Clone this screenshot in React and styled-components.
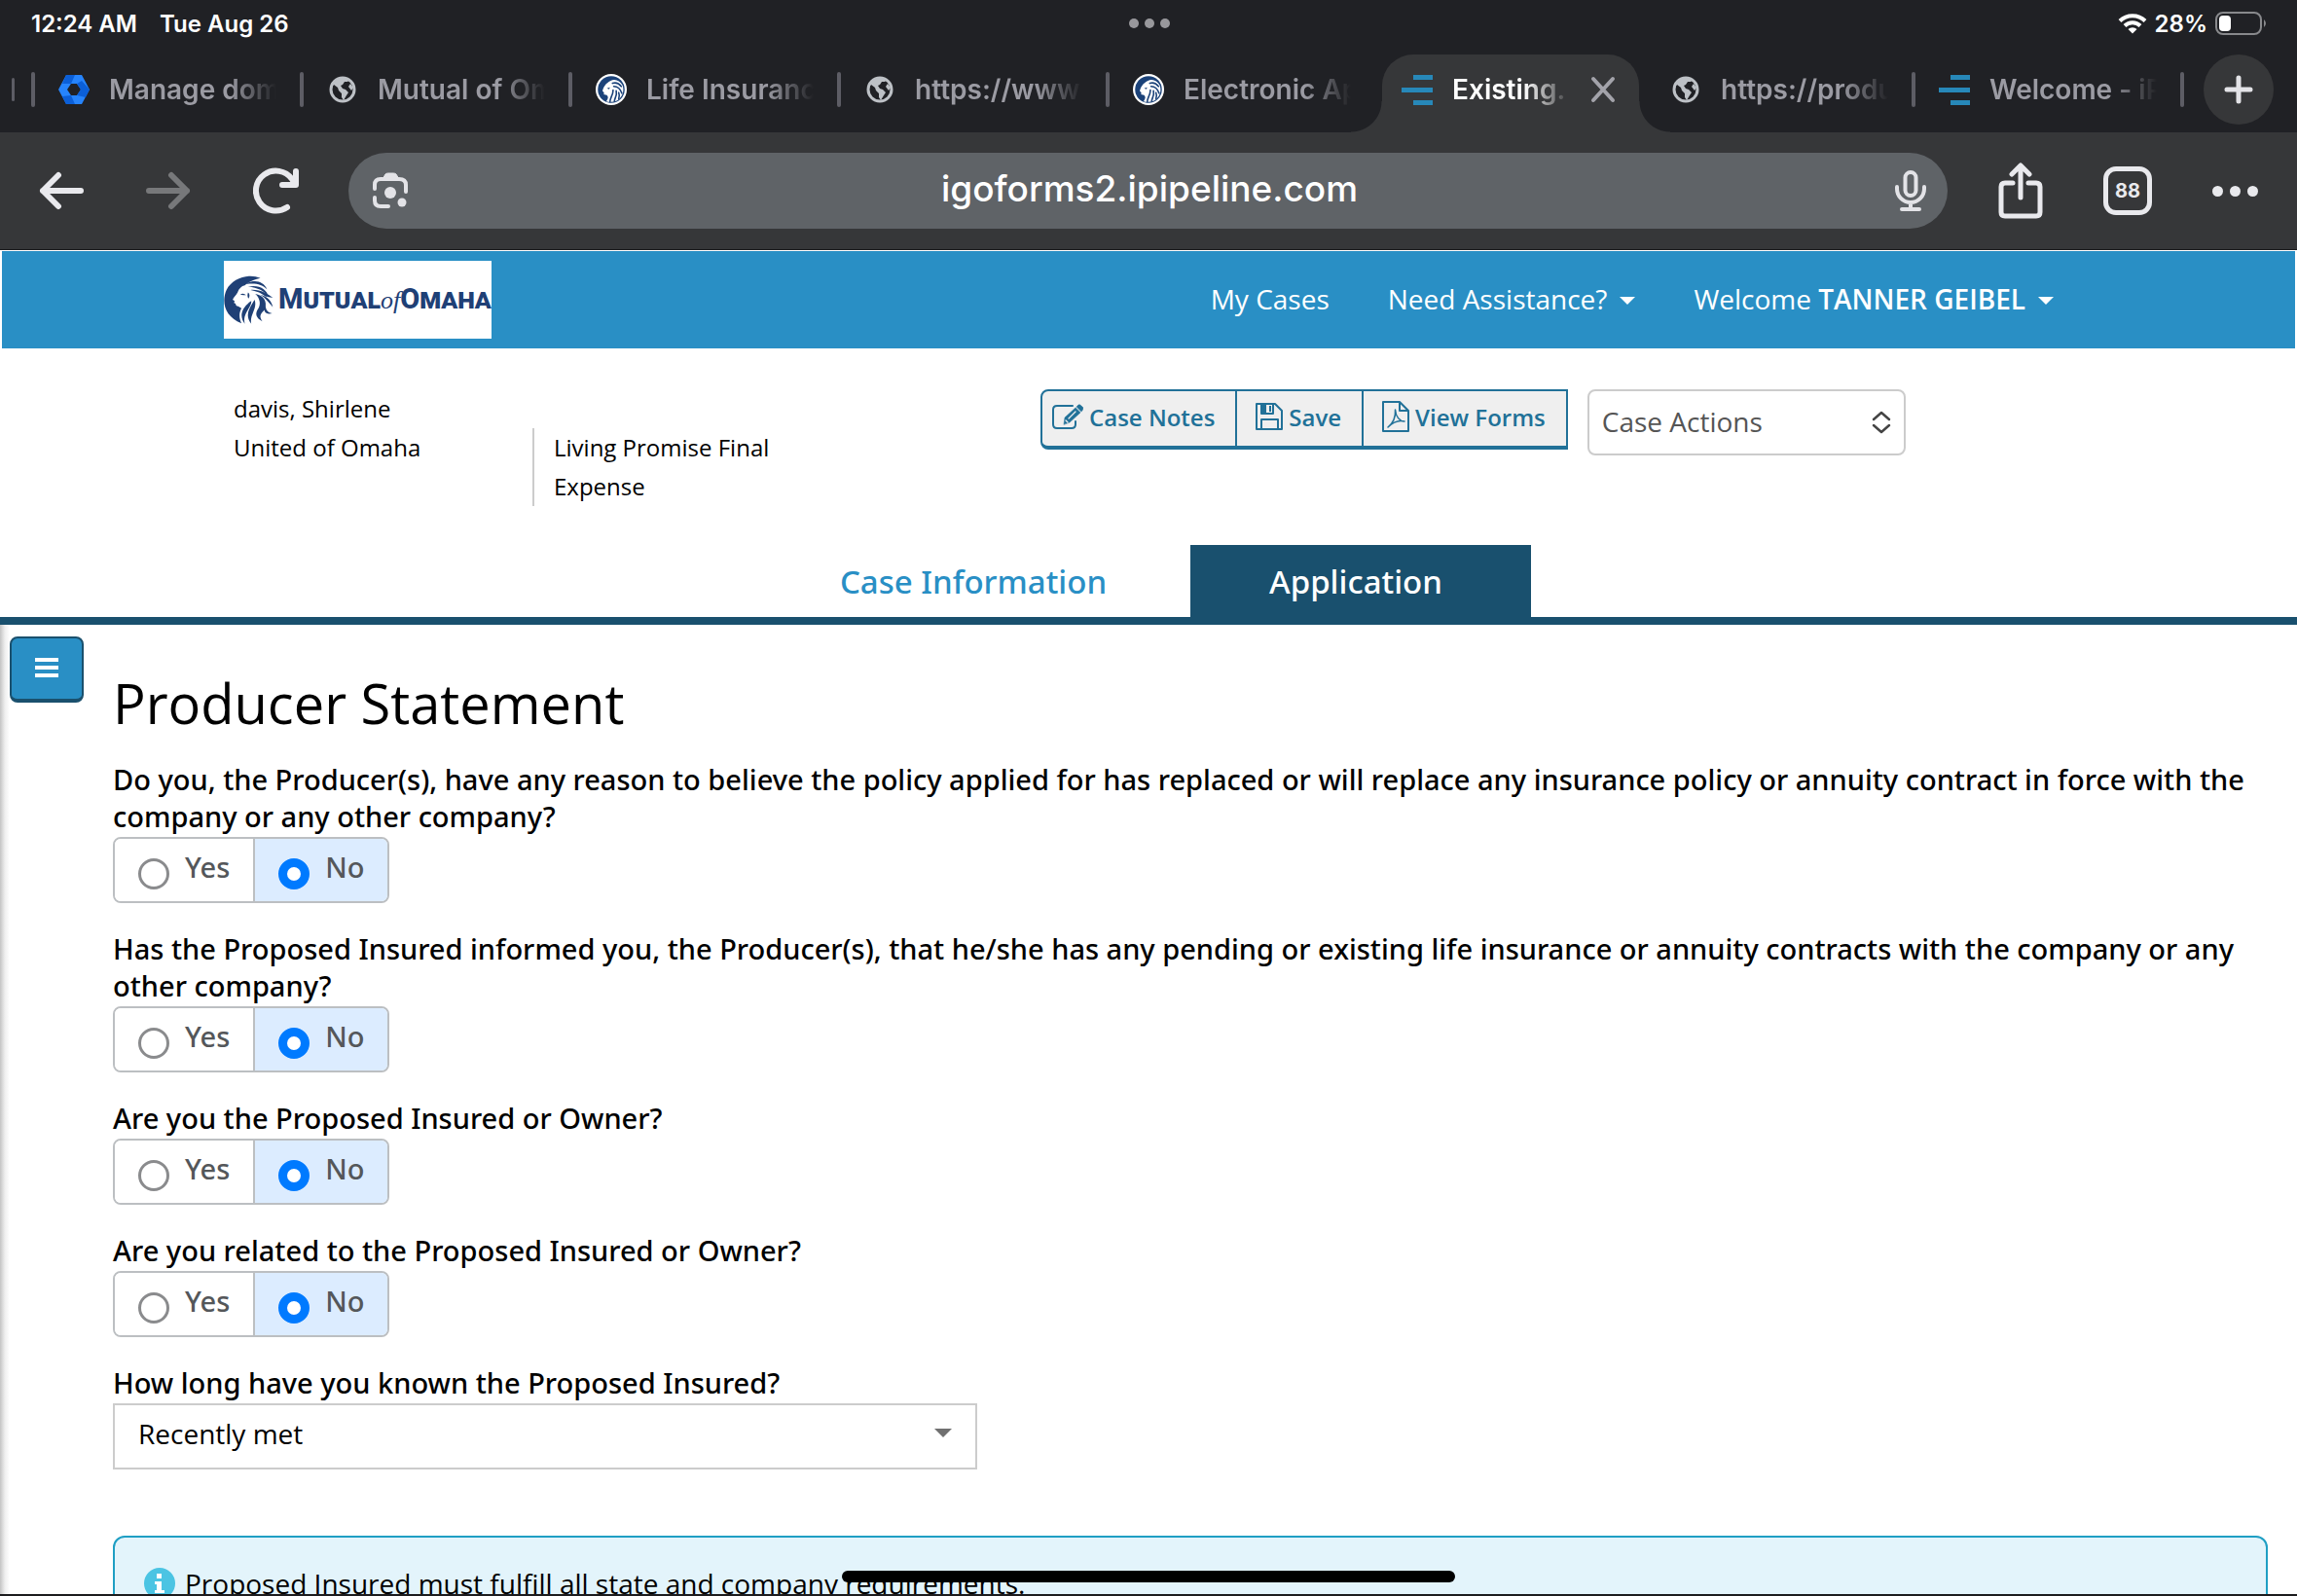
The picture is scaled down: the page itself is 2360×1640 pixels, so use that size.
import React, { useState } from "react";
import styled, { createGlobalStyle, css } from "styled-components";

const GlobalStyle = createGlobalStyle`
  *, *::before, *::after { box-sizing: border-box; }
  html, body { margin: 0; padding: 0; background: #fff; }
  body { font-family: "Open Sans", "Noto Sans", sans-serif; color: #000; }
  button, input, select { font: inherit; color: inherit; margin: 0; }
  a { color: inherit; text-decoration: none; }
  svg { display: block; flex: none; }
`;

const uiFont = `Inter, Roboto, sans-serif`;
const mediumFont = `"Noto Sans", "Open Sans", sans-serif`;

/* ---------- device + browser chrome ---------- */

const Screen = styled.div`
  display: flex;
  flex-direction: column;
  height: 100vh;
  overflow: hidden;
  border-bottom: 2px solid #1c1c1e;
`;

const Chrome = styled.header`
  flex: none;
  background: #202125;
  font-family: ${uiFont};
  border-bottom: 1px solid #1b1b1d;
`;

const StatusBar = styled.div`
  display: grid;
  grid-template-columns: 1fr auto 1fr;
  align-items: center;
  height: 48px;
  padding: 0 30px 0 32px;
  color: #fff;
  font-size: 24px;
  font-weight: 600;
`;

const StatusLeft = styled.div`
  display: flex;
  gap: 23px;
`;

const StatusRight = styled.div`
  display: flex;
  justify-content: flex-end;
  align-items: center;
  gap: 8px;
`;

const Dots = styled.div`
  display: flex;
  gap: ${(p) => p.$gap}px;
  i {
    width: ${(p) => p.$size}px;
    height: ${(p) => p.$size}px;
    border-radius: 50%;
    background: ${(p) => p.$color};
  }
`;

const TabStrip = styled.nav`
  display: flex;
  height: 88px;
  padding: 8px 24px 0 0;
`;

const TabSliver = styled.div`
  width: 32px;
  padding: 24px 0 0 12px;
  &::before {
    content: "";
    display: block;
    width: 3px;
    height: 24px;
    border-radius: 2px;
    background: #5d5d65;
  }
`;

const TabList = styled.div`
  display: flex;
  flex: 1;
  min-width: 0;
`;

const Divider = styled.span`
  flex: none;
  width: 4px;
  height: 36px;
  margin-top: 18px;
  border-radius: 2px;
  background: ${(p) => (p.$hidden ? "transparent" : "#5d5d65")};
`;

const TabSlot = styled.div`
  display: flex;
  flex: 1 1 0;
  min-width: 0;
`;

const BrowserTab = styled.button`
  position: relative;
  display: flex;
  flex: 1;
  align-items: center;
  min-width: 0;
  height: 80px;
  padding: 0 24px 8px;
  border: 0;
  background: none;
  color: #9b9ba3;
  font-size: 28px;
  font-weight: 600;
  text-align: left;
  ${(p) =>
    p.$active &&
    css`
      margin: 0 4px;
      padding: 0 24px 8px 20px;
      border-radius: 32px 32px 0 0;
      background: #363739;
      color: #fff;
      &::before,
      &::after {
        content: "";
        position: absolute;
        bottom: 0;
        width: 32px;
        height: 32px;
      }
      &::before {
        right: 100%;
        background: radial-gradient(circle at 0 0, transparent 31px, #363739 32px);
      }
      &::after {
        left: 100%;
        background: radial-gradient(circle at 100% 0, transparent 31px, #363739 32px);
      }
      > svg {
        margin-left: 20px;
        color: #a3a3aa;
      }
    `}
`;

const Favicon = styled.span`
  display: grid;
  place-items: center;
  flex: none;
  width: 32px;
  margin-right: 20px;
`;

const TabTitle = styled.span`
  flex: 1;
  min-width: 0;
  overflow: hidden;
  white-space: nowrap;
  line-height: 40px;
  mask-image: linear-gradient(to right, #000 calc(100% - 48px), transparent);
`;

const NewTab = styled.button`
  display: grid;
  place-items: center;
  width: 72px;
  height: 72px;
  margin-left: 20px;
  padding: 0;
  border: 0;
  border-radius: 50%;
  background: #363739;
  color: #e3e3e7;
`;

const Toolbar = styled.div`
  display: flex;
  align-items: center;
  height: 120px;
  padding: 0 40px;
  background: #363739;
`;

const ToolGroup = styled.div`
  display: flex;
  align-items: center;
  gap: ${(p) => p.$gap}px;
`;

const ToolButton = styled.button`
  display: grid;
  place-items: center;
  min-width: 46px;
  height: 60px;
  padding: 0;
  border: 0;
  background: none;
  color: ${(p) => (p.$dim ? "#77787a" : "#e9e9ed")};
`;

const TabCount = styled.span`
  display: grid;
  place-items: center;
  width: 50px;
  height: 50px;
  border: 5px solid #e9e9ed;
  border-radius: 13px;
  font-size: 20px;
  font-weight: 700;
`;

const Omnibox = styled.div`
  display: flex;
  flex: 1;
  align-items: center;
  height: 78px;
  margin: 0 52px 0 50px;
  padding: 0 22px 0 24px;
  border-radius: 39px;
  background: #5f6367;
  color: #e3e3e7;
`;

const Address = styled.input`
  flex: 1;
  min-width: 0;
  height: 60px;
  padding: 0 5px 6px 0;
  border: 0;
  outline: 0;
  background: none;
  color: #fff;
  font-size: 37px;
  font-weight: 500;
  text-align: center;
`;

/* ---------- web page ---------- */

const Page = styled.div`
  display: flex;
  flex-direction: column;
  flex: 1;
  min-height: 0;
  overflow: hidden;
`;

const SiteHeader = styled.div`
  display: flex;
  flex: none;
  align-items: center;
  height: 100px;
  margin: 1px 2px 0;
  padding: 0 248px 0 228px;
  background: #298fc5;
`;

const Brand = styled.a`
  display: flex;
  align-items: center;
  gap: 5px;
  width: 275px;
  height: 80px;
  overflow: hidden;
  background: #fff;
  color: #1f4076;
`;

const Wordmark = styled.span`
  display: flex;
  align-items: baseline;
  font-family: Roboto, sans-serif;
  font-size: 29px;
  font-weight: 800;
  line-height: 40px;
  font-variant: small-caps;
  em {
    font-family: "Liberation Serif", serif;
    font-size: 26px;
    font-weight: 400;
    font-variant: normal;
  }
`;

const SiteNav = styled.nav`
  display: flex;
  gap: 60px;
  margin-left: auto;
  padding-bottom: 2px;
  color: #fff;
  font-size: 28px;
  line-height: 40px;
`;

const NavLink = styled.a`
  display: flex;
  align-items: center;
  gap: 13px;
  b { font-weight: 600; }
`;

const Caret = styled.span`
  width: 0;
  height: 0;
  margin-top: 4px;
  border: ${(p) => p.$size}px solid transparent;
  border-top-color: ${(p) => p.$color};
  border-bottom: 0;
`;

const CaseBar = styled.section`
  display: grid;
  grid-template-columns: 829px auto 1fr;
  flex: none;
  align-items: start;
  min-height: 202px;
  padding: 42px 240px 40px;
`;

const CaseInfo = styled.div`
  display: grid;
  grid-template-columns: 307px 260px;
  font-size: 24px;
  line-height: 40px;
`;

const InfoLine = styled.div`
  grid-column: ${(p) => p.$col || 1};
  padding-left: ${(p) => (p.$ruled ? 20 : 0)}px;
  border-left: ${(p) => (p.$ruled ? "2px solid #ccc" : "0")};
`;

const ButtonGroup = styled.div`
  display: flex;
  margin-right: 20px;
`;

const GroupButton = styled.button`
  display: flex;
  align-items: center;
  gap: 6px;
  height: 62px;
  padding: 0 21px 4px ${(p) => (p.$first ? 10 : 19)}px;
  border: 2px solid #217198;
  border-width: 2px 2px 4px ${(p) => (p.$first ? 2 : 0)}px;
  border-radius: ${(p) => (p.$first ? "8px 0 0 8px" : "0")};
  background: #efefef;
  color: #217198;
  font-size: 24px;
  font-weight: 600;
  white-space: nowrap;
`;

const SelectWrap = styled.div`
  display: grid;
  align-items: center;
  width: ${(p) => p.$width};
  > * { grid-area: 1 / 1; }
  > :last-child {
    justify-self: end;
    margin-right: ${(p) => p.$inset}px;
    color: #444;
    pointer-events: none;
  }
`;

const Select = styled.select`
  width: 100%;
  height: 68px;
  padding: ${(p) => (p.$plain ? "0 48px 6px 24px" : "0 48px 2px 13px")};
  border: 2px solid #ccc;
  border-radius: ${(p) => (p.$plain ? 0 : 8)}px;
  appearance: none;
  background: #fff;
  color: ${(p) => (p.$plain ? "#000" : "#555")};
  font-size: 28px;
`;

const SelectCaret = styled(Caret)`
  margin-top: 0;
  margin-bottom: 8px;
`;

const CaseTabs = styled.nav`
  display: flex;
  flex: none;
  justify-content: center;
  gap: 10px;
  border-bottom: 8px solid #19506e;
`;

const CaseTab = styled.a`
  width: ${(p) => (p.$active ? 350 : 426)}px;
  padding: 2px ${(p) => (p.$active ? 10 : 0)}px 0 0;
  background: ${(p) => (p.$active ? "#19506e" : "transparent")};
  color: ${(p) => (p.$active ? "#fff" : "#298fc5")};
  font-family: ${mediumFont};
  font-size: 33px;
  font-weight: 500;
  line-height: 72px;
  text-align: center;
`;

const Body = styled.div`
  display: flex;
  flex: 1;
  min-height: 0;
  overflow: hidden;
  background: linear-gradient(to right, #c4c4c4, #eee 5px, #fff 10px);
`;

const Side = styled.aside`
  flex: none;
  width: 116px;
  padding: 12px 0 0 10px;
`;

const MenuButton = styled.button`
  display: grid;
  place-items: center;
  width: 76px;
  height: 68px;
  padding: 0 0 2px;
  border: 2px solid #1a506d;
  border-bottom-width: 4px;
  border-radius: 8px;
  background: #298fc5;
  color: #fff;
`;

const Main = styled.main`
  flex: 1;
  min-width: 0;
  padding: 42px 30px 0 0;
`;

const Title = styled.h1`
  margin: 0 0 22px;
  font-size: 56px;
  font-weight: 400;
  line-height: 76px;
`;

const Question = styled.fieldset`
  min-width: 0;
  margin: 0 0 28px;
  padding: 0;
  border: 0;
`;

const Prompt = styled.legend`
  display: block;
  padding: 0 0 2px;
  font-family: ${mediumFont};
  font-size: 29px;
  font-weight: 500;
  line-height: 38px;
`;

const Toggle = styled.div`
  display: inline-flex;
  vertical-align: top;
  height: 68px;
  overflow: hidden;
  border: 2px solid #bcbfc2;
  border-radius: 8px;
`;

const Option = styled.label`
  display: flex;
  gap: 16px;
  padding: 10px 24px 0;
  border-left: ${(p) => (p.$first ? 0 : 2)}px solid #bcbfc2;
  background: ${(p) => (p.$on ? "#dcecff" : "#fff")};
  color: #54575a;
  font-family: ${mediumFont};
  font-size: 29px;
  font-weight: 500;
  line-height: 38px;
`;

const Radio = styled.input`
  width: 32px;
  height: 32px;
  margin-top: 10px;
  appearance: none;
  border: 3px solid #8a8b8d;
  border-radius: 50%;
  background: #fff;
  &:checked { border: 9px solid #007aff; }
`;

const Notice = styled.div`
  display: flex;
  align-items: center;
  gap: 10px;
  margin-top: 68px;
  padding: 28px 30px;
  border: 2px solid #1f9fc4;
  border-radius: 12px;
  background: #e3f4fb;
  font-size: 28px;
  line-height: 38px;
`;

const InfoBadge = styled.span`
  display: grid;
  place-items: center;
  width: 32px;
  height: 32px;
  border-radius: 50%;
  background: #4bc4e3;
`;

const HomeIndicator = styled.div`
  position: fixed;
  bottom: 14px;
  left: 50%;
  width: 630px;
  height: 12px;
  margin-left: -315px;
  border-radius: 6px;
  background: #000;
`;

/* ---------- drawings ---------- */

const Lion = () => (
  <svg width="51" height="50" viewBox="0 0 152 148" fill="currentColor" aria-hidden="true">
    <path d="M112 8C76-8 26 8 8 44C-8 80 2 126 54 146C46 130 46 114 54 100L44 94C38 94 36 90 36 86L31 84L33 78L27 74C30 66 38 60 42 52C46 40 54 32 64 30C76 20 92 12 112 8Z" />
    <path d="M50 58q10-6 18 2q-8 0-18-2zM74 52q8 6 2 18q-6-4-2-18z" />
    <path d="M66 26C94 10 122 18 132 42C118 26 96 22 66 26Z" />
    <path d="M74 34C106 26 134 42 136 66C124 46 104 38 74 34Z" />
    <path d="M82 44C112 42 134 56 150 68C138 66 134 64 128 64C116 54 102 48 82 44Z" />
    <path d="M96 56C120 60 134 76 126 104C110 118 108 126 118 140C98 130 94 116 106 100C114 86 110 68 96 56Z" />
    <path d="M112 58C134 64 146 78 150 96C140 84 128 70 112 58Z" />
    <path d="M84 78C86 98 56 114 64 148C46 124 54 98 84 78Z" />
    <path d="M94 74C104 100 78 120 84 148C64 122 76 104 94 74Z" />
    <path d="M128 92C128 106 134 112 148 116C128 122 118 108 128 92Z" />
  </svg>
);

const LionBadge = () => (
  <svg width="32" height="32" viewBox="0 0 100 100" aria-hidden="true">
    <circle cx="50" cy="50" r="50" fill="#fff" />
    <circle cx="50" cy="50" r="43" fill="#1b4279" />
    <path fill="#fff" d="M22 55C25 42 32 30 48 22C62 14 78 22 86 36C92 52 88 68 76 80C66 90 50 92 34 88C40 80 42 74 36 68L26 66L27 60Z" />
    <g fill="none" stroke="#1b4279" strokeWidth="5" strokeLinecap="round">
      <path d="M54 30C66 26 76 32 82 40" />
      <path d="M58 40C70 40 80 50 84 62" />
      <path d="M56 52C56 68 46 76 46 90" />
      <path d="M66 54C70 70 60 78 60 88" />
      <path d="M74 60C78 70 74 76 74 80" />
    </g>
    <path fill="#1b4279" d="M36 46l10-3-3 6z" />
  </svg>
);

const Globe = () => (
  <svg width="28" height="28" viewBox="0 0 28 28" aria-hidden="true">
    <circle cx="14" cy="14" r="12" fill="none" stroke="#bdc1c6" strokeWidth="3" />
    <path
      fill="#bdc1c6"
      d="M3 11C4 6 9 2 14 2C17 2 19 3 21 4L19 6L16 6L14 9L12 10L14 13L17 14L20 17L18 20L15 25L13 22L13 18L10 15L9 12L5 9ZM22 8L25 12L23 15L20 11Z"
    />
  </svg>
);

const HexMark = () => (
  <svg width="32" height="32" viewBox="0 0 32 32" aria-hidden="true">
    <path fill="#2684fc" fillRule="evenodd" d="M8 1H24L32 16L24 31H8L0 16ZM13 10L9 16L13 22H19L23 16L19 10Z" />
    <path fill="#0b5fd8" d="M8 1H17L13 10H4ZM24 7L32 16L28 24L19 22L23 16L19 10ZM4 23L13 22L17 31H8Z" />
  </svg>
);

const Pipeline = () => (
  <svg width="32" height="32" viewBox="0 0 32 32" fill="#2788b9" aria-hidden="true">
    <path d="M12 1h20v5H12zM0 14h32v5H0zM12 27h20v5H12z" />
  </svg>
);

const Line = ({ w, h, sw = 2, d, children }) => (
  <svg
    width={w}
    height={h}
    viewBox={`0 0 ${w} ${h}`}
    fill="none"
    stroke="currentColor"
    strokeWidth={sw}
    strokeLinecap="round"
    strokeLinejoin="round"
    aria-hidden="true"
  >
    {d && <path d={d} />}
    {children}
  </svg>
);

const Close = () => <Line w={26} h={28} sw={4} d="M3 3L23 25M23 3L3 25" />;
const Plus = () => <Line w={30} h={30} sw={5} d="M15 3V27M3 15H27" />;
const Back = () => <Line w={46} h={40} sw={6} d="M43 20H4M20 4L4 20L20 36" />;
const Forward = () => <Line w={46} h={40} sw={6} d="M3 20H42M26 4L42 20L26 36" />;
const Reload = () => (
  <Line w={48} h={48} sw={6} d="M35 41A20.500 20.500 0 1 1 40 12L43 17M44 4V18H30" />
);
const Lens = () => (
  <Line w={38} h={38} sw={4} d="M3 17V13Q3 7 9 7H28Q35 7 35 13V20M3 26V29Q3 35 9 35H17">
    <path fill="currentColor" strokeWidth="1" d="M11 7L14 2Q15 1 17 1H22Q24 1 25 2L28 7Z" />
    <circle cx="19" cy="21" r="6" fill="currentColor" stroke="none" />
    <circle cx="31" cy="31" r="4.500" fill="currentColor" stroke="none" />
  </Line>
);
const Mic = () => (
  <Line w={32} h={42} sw={4} d="M2 17V19A14 14 0 0 0 30 19V17M16 33V39M7 40H25">
    <rect x="10.500" y="2" width="11" height="24" rx="5.500" />
  </Line>
);
const Share = () => (
  <Line w={46} h={58} sw={5} d="M15 21H7Q3 21 3 25V51Q3 55 7 55H39Q43 55 43 51V25Q43 21 39 21H31M23 36V4M14 12L23 3L32 12" />
);
const Wifi = () => (
  <svg width="30" height="22" viewBox="0 0 30 22" aria-hidden="true">
    <g fill="none" stroke="#fff" strokeWidth="4">
      <path d="M2 8.500A18.500 18.500 0 0 1 28 8.500" />
      <path d="M7 13.500A11.500 11.500 0 0 1 23 13.500" />
    </g>
    <path fill="#fff" d="M15 21.500L10.500 17A6.500 6.500 0 0 1 19.500 17Z" />
  </svg>
);
const Battery = () => (
  <svg width="54" height="26" viewBox="0 0 54 26" aria-hidden="true">
    <rect x="1" y="2" width="46" height="22" rx="7" fill="none" stroke="#88898c" strokeWidth="2" />
    <path d="M50 9Q54 13 50 17Z" fill="#88898c" />
    <rect x="4" y="5" width="12" height="16" rx="4" fill="#fff" />
  </svg>
);
const NoteIcon = () => (
  <Line w={32} h={28} d="M21 3H5Q1 3 1 7V22Q1 26 5 26H20Q24 26 24 22V19">
    <path fill="currentColor" strokeWidth="0.500" d="M12 22L13 15L24 5L29 10L18 20ZM25 4L27 2Q28 1 30 3L32 5Q32 7 30 9Z" />
    <path stroke="#efefef" strokeWidth="1.300" d="M17 16L24 9M14 18L16 20" />
  </Line>
);
const DiskIcon = () => (
  <Line w={28} h={28} d="M1 1H20L27 8V27H1ZM6 1V11H18V1M6 27V17H23V27">
    <path fill="currentColor" stroke="none" d="M6 1H11V11H6ZM14 3H16V9H14Z" />
  </Line>
);
const PdfIcon = () => (
  <Line w={28} h={34} d="M1 2H18L27 11V32H1ZM18 2V11H27">
    <path strokeWidth="1.500" d="M6 28C11 24 14 17 13.500 10C14 17 18 22 23 22C16 20 11 23 6 28Z" />
  </Line>
);
const UpDown = () => (
  <Line w={22} h={24} sw={2.5} d="M3 9L11 2L19 9M3 15L11 22L19 15" />
);
const Bars = () => (
  <svg width="24" height="20" viewBox="0 0 24 20" fill="currentColor" aria-hidden="true">
    <path d="M0 0h24v4H0zM0 8h24v4H0zM0 16h24v4H0z" />
  </svg>
);
const InfoGlyph = () => (
  <svg width="12" height="24" viewBox="0 0 12 24" fill="#fff" aria-hidden="true">
    <path d="M3 2h5v5H3zM1 10h7v9h3v3H1v-3h2v-6H1z" />
  </svg>
);

const browserTabs = [
  { title: "Manage dom", icon: <HexMark /> },
  { title: "Mutual of Om", icon: <Globe /> },
  { title: "Life Insuranc", icon: <LionBadge /> },
  { title: "https://www", icon: <Globe /> },
  { title: "Electronic Ap", icon: <LionBadge /> },
  { title: "Existing.", icon: <Pipeline />, active: true },
  { title: "https://produ", icon: <Globe /> },
  { title: "Welcome - iP", icon: <Pipeline /> },
];

const questions = [
  "Do you, the Producer(s), have any reason to believe the policy applied for has replaced or will replace any insurance policy or annuity contract in force with the company or any other company?",
  "Has the Proposed Insured informed you, the Producer(s), that he/she has any pending or existing life insurance or annuity contracts with the company or any other company?",
  "Are you the Proposed Insured or Owner?",
  "Are you related to the Proposed Insured or Owner?",
];

function YesNo({ name, prompt }) {
  const [value, setValue] = useState("No");
  return (
    <Question>
      <Prompt>{prompt}</Prompt>
      <Toggle>
        {["Yes", "No"].map((choice, i) => (
          <Option key={choice} $first={i === 0} $on={value === choice}>
            <Radio type="radio" name={name} checked={value === choice} onChange={() => setValue(choice)} />
            {choice}
          </Option>
        ))}
      </Toggle>
    </Question>
  );
}

export default function App() {
  return (
    <Screen>
      <GlobalStyle />
      <Chrome>
        <StatusBar>
          <StatusLeft>
            <span>12:24 AM</span>
            <span>Tue Aug 26</span>
          </StatusLeft>
          <Dots $gap={6} $size={10} $color="#98989c"><i /><i /><i /></Dots>
          <StatusRight>
            <Wifi />
            <span>28%</span>
            <Battery />
          </StatusRight>
        </StatusBar>
        <TabStrip>
          <TabSliver />
          <TabList>
            {browserTabs.map((tab, i) => (
              <TabSlot key={i}>
                <Divider $hidden={tab.active || browserTabs[i - 1]?.active} />
                <BrowserTab $active={tab.active}>
                  <Favicon>{tab.icon}</Favicon>
                  <TabTitle>{tab.title}</TabTitle>
                  {tab.active && <Close />}
                </BrowserTab>
              </TabSlot>
            ))}
            <Divider />
          </TabList>
          <NewTab aria-label="New tab"><Plus /></NewTab>
        </TabStrip>
        <Toolbar>
          <ToolGroup $gap={64}>
            <ToolButton aria-label="Back"><Back /></ToolButton>
            <ToolButton aria-label="Forward" $dim><Forward /></ToolButton>
            <ToolButton aria-label="Reload"><Reload /></ToolButton>
          </ToolGroup>
          <Omnibox>
            <Lens />
            <Address aria-label="Address" defaultValue="igoforms2.ipipeline.com" />
            <Mic />
          </Omnibox>
          <ToolGroup $gap={62}>
            <ToolButton aria-label="Share"><Share /></ToolButton>
            <ToolButton aria-label="Open tabs"><TabCount>88</TabCount></ToolButton>
            <ToolButton aria-label="More">
              <Dots $gap={7} $size={11} $color="#e9e9ed"><i /><i /><i /></Dots>
            </ToolButton>
          </ToolGroup>
        </Toolbar>
      </Chrome>

      <Page>
        <SiteHeader>
          <Brand href="#home">
            <Lion />
            <Wordmark>Mutual<em>of</em>Omaha</Wordmark>
          </Brand>
          <SiteNav>
            <NavLink href="#cases">My Cases</NavLink>
            <NavLink href="#help">Need Assistance? <Caret $size={8} $color="#fff" /></NavLink>
            <NavLink href="#account">
              <span>Welcome <b>TANNER GEIBEL</b></span>
              <Caret $size={8} $color="#fff" />
            </NavLink>
          </SiteNav>
        </SiteHeader>

        <CaseBar>
          <CaseInfo>
            <InfoLine>davis, Shirlene</InfoLine>
            <InfoLine>United of Omaha</InfoLine>
            <InfoLine $col={2} $ruled>Living Promise Final Expense</InfoLine>
          </CaseInfo>
          <ButtonGroup>
            <GroupButton $first><NoteIcon />Case Notes</GroupButton>
            <GroupButton><DiskIcon />Save</GroupButton>
            <GroupButton><PdfIcon />View Forms</GroupButton>
          </ButtonGroup>
          <SelectWrap $width="327px" $inset={14}>
            <Select aria-label="Case Actions"><option>Case Actions</option></Select>
            <UpDown />
          </SelectWrap>
        </CaseBar>

        <CaseTabs>
          <CaseTab href="#information">Case Information</CaseTab>
          <CaseTab href="#application" $active>Application</CaseTab>
        </CaseTabs>

        <Body>
          <Side>
            <MenuButton aria-label="Menu"><Bars /></MenuButton>
          </Side>
          <Main>
            <Title>Producer Statement</Title>
            {questions.map((q, i) => (
              <YesNo key={q} name={`question-${i + 1}`} prompt={q} />
            ))}
            <Prompt as="label" htmlFor="known">How long have you known the Proposed Insured?</Prompt>
            <SelectWrap $width="888px" $inset={26}>
              <Select id="known" $plain><option>Recently met</option></Select>
              <SelectCaret $size={9} $color="#707070" />
            </SelectWrap>
            <Notice>
              <InfoBadge><InfoGlyph /></InfoBadge>
              Proposed Insured must fulfill all state and company requirements.
            </Notice>
          </Main>
        </Body>
      </Page>
      <HomeIndicator />
    </Screen>
  );
}
